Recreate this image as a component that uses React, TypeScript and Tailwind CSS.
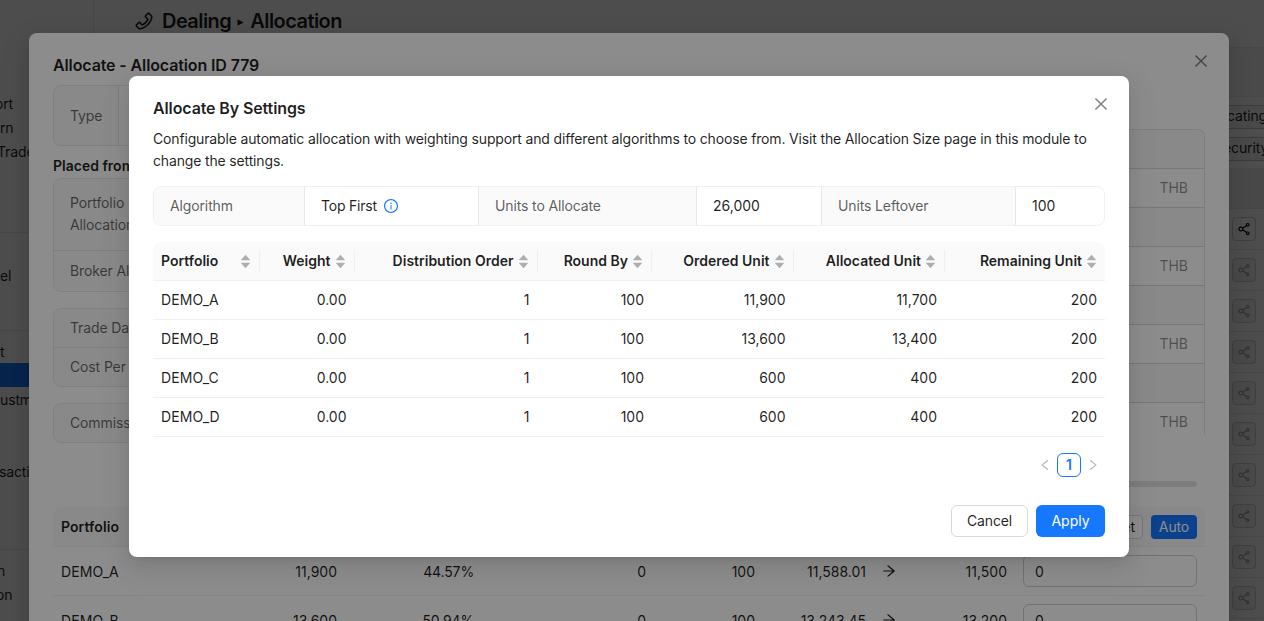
import React from "react";
import {
  AiFillCaretDown,
  AiFillCaretUp,
  AiOutlineArrowRight,
  AiOutlineClose,
  AiOutlineInfoCircle,
  AiOutlineLeft,
  AiOutlinePhone,
  AiOutlineRight,
  AiOutlineShareAlt,
} from "react-icons/ai";

const shadow =
  "shadow-[0_6px_16px_0_rgba(0,0,0,0.08),0_3px_6px_-4px_rgba(0,0,0,0.12),0_9px_28px_8px_rgba(0,0,0,0.05)]";

/* ---------- page behind the dialogs ---------- */

function Sidebar() {
  const item = "h-6 whitespace-nowrap";
  return (
    <aside className="flex h-full w-[94px] shrink-0 flex-col overflow-hidden border-r border-[#e8e8e8] pt-[92px] leading-6 tracking-[-0.13px]">
      <div className={`${item} -ml-[5px]`}>ort</div>
      <div className={item}>rn</div>
      <div className={`${item} -ml-[3px]`}>Trade</div>
      <div className="mt-[68px] border-t border-[#e8e8e8]" />
      <div className={`${item} mt-[31px]`}>el</div>
      <div className="mt-[42px] border-t border-[#e8e8e8]" />
      <div className={`${item} mt-2 pt-px`}>t</div>
      <div className="h-6 bg-[#1677ff]" />
      <div className={`${item} pt-px`}>ustment</div>
      <div className={`${item} mt-12 -ml-px pt-px`}>saction</div>
      <div className="mt-[66px] border-t border-[#e8e8e8]" />
      <div className={`${item} mt-[9px] -ml-[3px]`}>n</div>
      <div className={`${item} -ml-[4px]`}>on</div>
    </aside>
  );
}

function Page() {
  return (
    <div className="flex h-full overflow-hidden bg-white">
      <Sidebar />
      <div className="flex min-w-0 flex-1 flex-col">
        <header className="flex h-12 shrink-0 items-start border-b border-[#ececec] pl-[39px] pt-[9px]">
          <AiOutlinePhone className="mt-px size-[22px]" />
          <h1 className="ml-[7px] flex items-center text-[20px] font-semibold leading-6 tracking-[-0.56px]">
            Dealing
            <svg viewBox="0 0 7 7" className="ml-[6px] mr-[6px] mt-[3px] size-[7px] fill-current">
              <path d="M.5.3 6.7 3.5.5 6.7Z" />
            </svg>
            Allocation
          </h1>
        </header>
        <div className="flex min-h-0 flex-1 flex-col items-end">
          <div className="h-[49px] w-full shrink-0 border-b border-[#ececec] bg-[#f7f7f7]" />
          <div className="flex w-[40px] shrink-0 flex-col gap-2 pt-2 leading-[18px] tracking-[-0.13px]">
            <div className="flex h-6 items-center overflow-hidden border-y border-[#c4c4c4] bg-[#f5f5f5] pb-[2px]">
              <span className="ml-[3px]">cating</span>
            </div>
            <div className="flex h-6 items-center overflow-hidden border-y border-[#c4c4c4] bg-[#f5f5f5] pb-[2px]">
              <span className="-ml-px">ecurity</span>
            </div>
          </div>
          <div className="mt-[7px] h-[41px] w-[36px] shrink-0 border-b border-[#e6e6e6] bg-[#f0f0f0]" />
          {Array.from({ length: 10 }, (_, i) => (
            <div key={i} className="flex h-[41px] w-[36px] shrink-0 items-center border-b border-[#ececec] pl-1">
              <div
                className={`flex size-6 items-center justify-center rounded border border-[#d0d0d0] ${
                  i === 0 ? "text-black" : "bg-[#f5f5f5] text-black/35"
                }`}
              >
                <AiOutlineShareAlt className="size-4 shrink-0" />
              </div>
            </div>
          ))}
        </div>
      </div>
    </div>
  );
}

/* ---------- outer dialog ---------- */

const labelCell =
  "border-[#e4e4e4] bg-[#fafafa] pl-4 text-black/60 overflow-hidden whitespace-nowrap tracking-[-0.13px]";

function OuterRow({ cells }: { cells: string[] }) {
  return (
    <div className="flex h-12 items-center">
      <span className="w-[168px] pl-2 tracking-[0.08px]">{cells[0]}</span>
      <span className="w-[116px] text-right">{cells[1]}</span>
      <span className="w-[137px] text-right tracking-[-0.13px]">{cells[2]}</span>
      <span className="w-[172px] text-right">{cells[3]}</span>
      <span className="w-[109px] text-right">{cells[4]}</span>
      <span className="w-[111px] text-right">{cells[5]}</span>
      <AiOutlineArrowRight className="ml-[15px] size-4" />
      <span className="w-[110px] text-right">{cells[6]}</span>
      <span className="ml-4 flex h-8 w-[174px] items-center rounded-md border border-[#cfcfcf] pl-[11px]">0</span>
    </div>
  );
}

function OuterModal() {
  return (
    <section className={`mt-[33px] ml-[29px] h-[640px] w-[1200px] rounded-lg bg-white px-6 ${shadow}`}>
      <header className="flex h-[52px] items-start justify-between pt-5">
        <h2 className="text-base font-semibold leading-6 tracking-[-0.12px]">Allocate - Allocation ID 779</h2>
        <AiOutlineClose className="-mr-[5px] -mt-px size-[18px] text-black/50" />
      </header>
      <div className="flex h-[402px] justify-between overflow-hidden">
        <div className="w-[400px]">
          <div className="flex h-[61px] rounded-lg border border-[#e8e8e8]">
            <div className={`${labelCell} flex w-[65px] items-center rounded-l-lg border-r`}>Type</div>
          </div>
          <h3 className="mt-[9px] font-semibold leading-[22px]">Placed from</h3>
          <div className="mt-px h-[114px] overflow-hidden rounded-lg border border-[#e8e8e8]">
            <div className={`${labelCell} h-[72px] border-b pt-[13px] leading-[22px]`}>
              Portfolio
              <br />
              Allocation
            </div>
            <div className={`${labelCell} flex h-[39px] items-center`}>Broker Al</div>
          </div>
          <div className="mt-4 h-[79px] overflow-hidden rounded-lg border border-[#e8e8e8]">
            <div className={`${labelCell} flex h-[39px] items-center border-b pb-px`}>Trade Date</div>
            <div className={`${labelCell} flex h-[38px] items-center pb-[2px]`}>Cost Per</div>
          </div>
          <div className="mt-4 h-10 overflow-hidden rounded-lg border border-[#e8e8e8]">
            <div className={`${labelCell} flex h-full items-center pb-[2px]`}>Commission</div>
          </div>
        </div>
        <div className="mt-11 h-[306px] w-[300px] overflow-hidden rounded-tr-lg border-r border-t border-[#e4e4e4]">
          {["", "THB", "", "THB", "", "THB", "", "THB"].map((v, i) => (
            <div
              key={i}
              className={`flex h-[39px] items-center justify-end border-b border-[#d9d9d9] pr-4 leading-[20px] text-black/45 ${
                v ? "" : "bg-[#fafafa]"
              }`}
            >
              {v}
            </div>
          ))}
        </div>
      </div>
      <div className="-mt-[6px] ml-auto mr-2 h-[6px] w-[400px] rounded-full bg-[#e4e4e4]" />
      <div className="mt-5 flex h-10 items-center rounded-t-lg border-b border-[#f0f0f0] bg-[#fafafa] pl-2 pr-2">
        <span className="font-semibold tracking-[0.08px]">Portfolio</span>
        <span className="ml-auto flex h-6 items-center rounded border border-[#d9d9d9] bg-white px-[7px]">Reset</span>
        <span className="ml-2 flex h-6 w-[46px] items-center justify-center rounded bg-[#1677ff] tracking-[-0.13px] text-white">
          Auto
        </span>
      </div>
      <div className="border-b border-[#f0f0f0]">
        <OuterRow cells={["DEMO_A", "11,900", "44.57%", "0", "100", "11,588.01", "11,500"]} />
      </div>
      <OuterRow cells={["DEMO_B", "13,600", "50.94%", "0", "100", "13,243.45", "13,200"]} />
    </section>
  );
}

/* ---------- inner dialog ---------- */

const columns = [
  { title: "Portfolio", width: "w-[107px]" },
  { title: "Weight", width: "w-[94.5px]" },
  { title: "Distribution Order", width: "w-[183px]" },
  { title: "Round By", width: "w-[114.5px]" },
  { title: "Ordered Unit", width: "w-[141.5px]" },
  { title: "Allocated Unit", width: "w-[151.5px]" },
  { title: "Remaining Unit", width: "w-[160px]" },
];

const rows = [
  ["DEMO_A", "0.00", "1", "100", "11,900", "11,700", "200"],
  ["DEMO_B", "0.00", "1", "100", "13,600", "13,400", "200"],
  ["DEMO_C", "0.00", "1", "100", "600", "400", "200"],
  ["DEMO_D", "0.00", "1", "100", "600", "400", "200"],
];

function Sorter() {
  return (
    <span className="flex flex-col text-black/30">
      <AiFillCaretUp className="size-[13px]" />
      <AiFillCaretDown className="-mt-[5px] size-[13px]" />
    </span>
  );
}

function Settings() {
  const label = "flex items-center border-r border-[#e8e8e8] bg-[#fafafa] pb-px pl-4 text-black/65";
  const value = "flex items-center border-r border-[#e8e8e8] pb-px pl-4";
  return (
    <div className="mt-3.5 flex h-10 w-[952px] overflow-hidden rounded-lg border border-[#f0f0f0] tracking-[-0.13px]">
      <div className={`${label} w-[151px]`}>Algorithm</div>
      <div className={`${value} w-[174px]`}>
        <span className="tracking-[-0.2px]">Top First</span>
        <AiOutlineInfoCircle className="ml-[6px] mt-px size-4 text-[#1677ff]" />
      </div>
      <div className={`${label} w-[218px]`}>Units to Allocate</div>
      <div className={`${value} w-[125px] tracking-normal`}>26,000</div>
      <div className={`${label} w-[194px]`}>Units Leftover</div>
      <div className="flex flex-1 items-center pb-px pl-4 tracking-normal">100</div>
    </div>
  );
}

function InnerModal() {
  return (
    <section className={`mt-[76px] ml-[129px] h-[481px] w-[1000px] rounded-lg bg-white px-6 pt-5 ${shadow}`}>
      <header className="flex h-8 items-start justify-between">
        <h2 className="text-base font-semibold leading-6 tracking-[-0.12px]">Allocate By Settings</h2>
        <AiOutlineClose className="-mr-[5px] -mt-px size-[18px] text-black/50" />
      </header>
      <p className="whitespace-nowrap leading-[22px] tracking-[-0.155px]">
        Configurable automatic allocation with weighting support and different algorithms to choose from. Visit the
        Allocation Size page in this module to
        <br />
        change the settings.
      </p>
      <Settings />
      <div className="mt-4 w-[952px]">
        <div className="flex h-[39px] items-center overflow-hidden rounded-t-lg border-b border-[#f0f0f0] bg-[#fafafa]">
          {columns.map((c, i) => (
            <div
              key={c.title}
              className={`${c.width} flex h-[22px] shrink-0 items-center gap-[3px] whitespace-nowrap pl-2 pr-[7px] font-semibold ${
                i === 0 ? "justify-between" : "justify-end"
              } ${i < 6 ? "border-r border-[#f0f0f0]" : ""}`}
            >
              <span className="pb-[2px]">{c.title}</span>
              <Sorter />
            </div>
          ))}
        </div>
        {rows.map((r) => (
          <div key={r[0]} className="flex h-[39px] items-center border-b border-[#f0f0f0] pb-[2px]">
            {r.map((v, i) => (
              <div
                key={i}
                className={`${columns[i].width} shrink-0 px-2 ${i === 0 ? "tracking-[0.08px]" : "text-right"}`}
              >
                {v}
              </div>
            ))}
          </div>
        ))}
      </div>
      <div className="mt-4 flex h-6 items-center justify-end">
        <AiOutlineLeft className="mr-[5px] size-[14px] text-black/30" />
        <span className="flex size-6 items-center justify-center rounded-md border border-[#1677ff] pb-px font-semibold text-[#1677ff]">
          1
        </span>
        <AiOutlineRight className="ml-[5px] mr-[5px] size-[14px] text-black/30" />
      </div>
      <footer className="mt-7 flex justify-end gap-2">
        <button className="h-8 w-[77px] rounded-md border border-[#d9d9d9] bg-white pb-[2px] tracking-[-0.13px]">
          Cancel
        </button>
        <button className="h-8 w-[69px] rounded-md bg-[#1677ff] pb-[2px] text-white">Apply</button>
      </footer>
    </section>
  );
}

export default function App() {
  return (
    <div className="relative h-[621px] w-[1264px] overflow-hidden font-[Inter,'Liberation_Sans',sans-serif] text-[14px] text-black/88">
      <Page />
      <div className="absolute inset-0 overflow-hidden bg-black/45">
        <OuterModal />
      </div>
      <div className="absolute inset-0 overflow-hidden bg-black/45">
        <InnerModal />
      </div>
    </div>
  );
}
